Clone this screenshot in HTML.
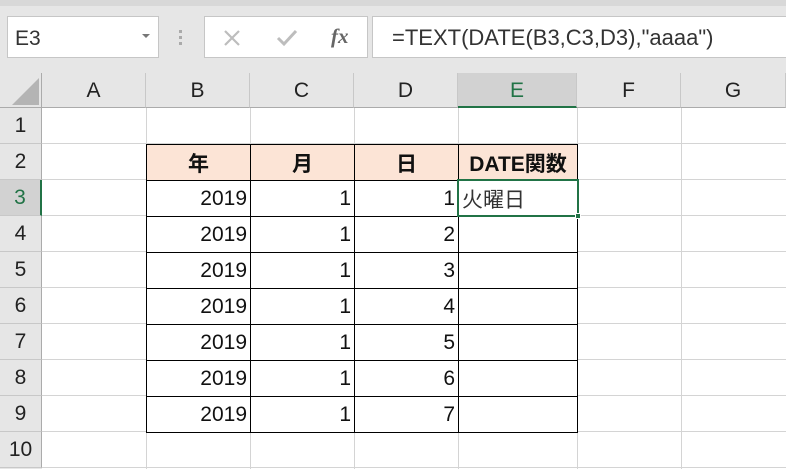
<!DOCTYPE html>
<html><head><meta charset="utf-8"><style>
*{margin:0;padding:0;box-sizing:border-box}
body{width:786px;height:469px;overflow:hidden;background:#e6e6e6;font-family:"Liberation Sans","Noto Sans CJK JP",sans-serif;position:relative}
.a{position:absolute}
.box{background:#fff;border:1px solid #c6c6c6}
.ch{position:absolute;top:73px;height:35px;background:#e6e6e6;border-right:1px solid #c8c8c8;border-bottom:1px solid #ababab;text-align:center;line-height:35px;font-size:21px;color:#222}
.rh{position:absolute;left:0;width:42px;height:36px;background:#e6e6e6;border-right:1px solid #ababab;border-bottom:1px solid #c8c8c8;text-align:center;line-height:36px;font-size:21px;color:#222}
.grid{position:absolute;left:42px;top:108px;width:744px;height:361px;background:#fff}
.vl{position:absolute;top:108px;width:1px;height:361px;background:#d4d4d4}
.hl{position:absolute;left:42px;width:744px;height:1px;background:#d4d4d4}
table{position:absolute;left:146px;top:144px;border-collapse:collapse}
td{border:1px solid #000;height:36px;font-size:21px;text-align:right;padding-right:3px;color:#111;background:#fff}
tr.h td{background:#fce4d6;font-weight:bold;text-align:center;padding:0}
</style></head><body>
<div class="a" style="left:0;top:0;width:786px;height:6px;background:#d8d8d8"></div>
<div class="a box" style="left:7px;top:16px;width:152px;height:42px"></div>
<div class="a" style="left:15px;top:27px;font-size:21px;color:#333">E3</div>
<div class="a" style="left:142px;top:34px;width:0;height:0;border-left:4px solid transparent;border-right:4px solid transparent;border-top:4px solid #777"></div>
<div class="a" style="left:179px;top:30px;width:3px;height:3px;background:#aaa;box-shadow:0 6px #aaa,0 12px #aaa"></div>
<div class="a box" style="left:204px;top:16px;width:164px;height:42px"></div>
<svg class="a" style="left:222px;top:28px" width="20" height="20"><path d="M3 3L17 17M17 3L3 17" stroke="#bdbdbd" stroke-width="2.2"/></svg>
<svg class="a" style="left:276px;top:28px" width="22" height="20"><path d="M2 10L8 16L20 3" stroke="#bdbdbd" stroke-width="3" fill="none"/></svg>
<div class="a" style="left:331px;top:24px;font-family:'Liberation Serif',serif;font-style:italic;font-weight:bold;font-size:21px;color:#666">fx</div>
<div class="a box" style="left:372px;top:16px;width:420px;height:42px"></div>
<div class="a" style="left:392px;top:25px;font-size:22px;color:#333">=TEXT(DATE(B3,C3,D3),"aaaa")</div>
<div class="a" style="left:0;top:73px;width:42px;height:35px;border-right:1px solid #ababab;border-bottom:1px solid #ababab"></div>
<svg class="a" style="left:12px;top:78px" width="28" height="28"><path d="M27 0L27 27L0 27Z" fill="#b4b4b4"/></svg>
<div class="ch" style="left:42px;width:104px">A</div>
<div class="ch" style="left:146px;width:104px">B</div>
<div class="ch" style="left:250px;width:104px">C</div>
<div class="ch" style="left:354px;width:104px">D</div>
<div class="ch" style="left:458px;width:119px;background:#d2d2d2;color:#217346;border-bottom:2px solid #217346">E</div>
<div class="ch" style="left:577px;width:104px">F</div>
<div class="ch" style="left:681px;width:105px">G</div>
<div class="grid"></div>
<div class="vl" style="left:146px"></div><div class="vl" style="left:250px"></div><div class="vl" style="left:354px"></div><div class="vl" style="left:458px"></div><div class="vl" style="left:577px"></div><div class="vl" style="left:681px"></div>
<div class="hl" style="top:143px"></div><div class="hl" style="top:179px"></div><div class="hl" style="top:215px"></div><div class="hl" style="top:251px"></div><div class="hl" style="top:287px"></div><div class="hl" style="top:323px"></div><div class="hl" style="top:359px"></div><div class="hl" style="top:395px"></div><div class="hl" style="top:431px"></div><div class="hl" style="top:467px"></div>
<div class="rh" style="top:108px">1</div>
<div class="rh" style="top:144px">2</div>
<div class="rh" style="top:180px;background:#d2d2d2;color:#217346;border-right:2px solid #217346">3</div>
<div class="rh" style="top:216px">4</div>
<div class="rh" style="top:252px">5</div>
<div class="rh" style="top:288px">6</div>
<div class="rh" style="top:324px">7</div>
<div class="rh" style="top:360px">8</div>
<div class="rh" style="top:396px">9</div>
<div class="rh" style="top:432px">10</div>
<table>
<colgroup><col style="width:104px"><col style="width:104px"><col style="width:104px"><col style="width:119px"></colgroup>
<tr class="h"><td>年</td><td>月</td><td>日</td><td>DATE関数</td></tr>
<tr><td>2019</td><td>1</td><td>1</td><td style="text-align:left;padding-left:3px;color:#333">火曜日</td></tr>
<tr><td>2019</td><td>1</td><td>2</td><td></td></tr>
<tr><td>2019</td><td>1</td><td>3</td><td></td></tr>
<tr><td>2019</td><td>1</td><td>4</td><td></td></tr>
<tr><td>2019</td><td>1</td><td>5</td><td></td></tr>
<tr><td>2019</td><td>1</td><td>6</td><td></td></tr>
<tr><td>2019</td><td>1</td><td>7</td><td></td></tr>
</table>
<div class="a" style="left:457px;top:179px;width:122px;height:38px;border:2px solid #217346"></div>
<div class="a" style="left:575px;top:213px;width:6px;height:6px;background:#217346;border:1px solid #fff"></div>
</body></html>
